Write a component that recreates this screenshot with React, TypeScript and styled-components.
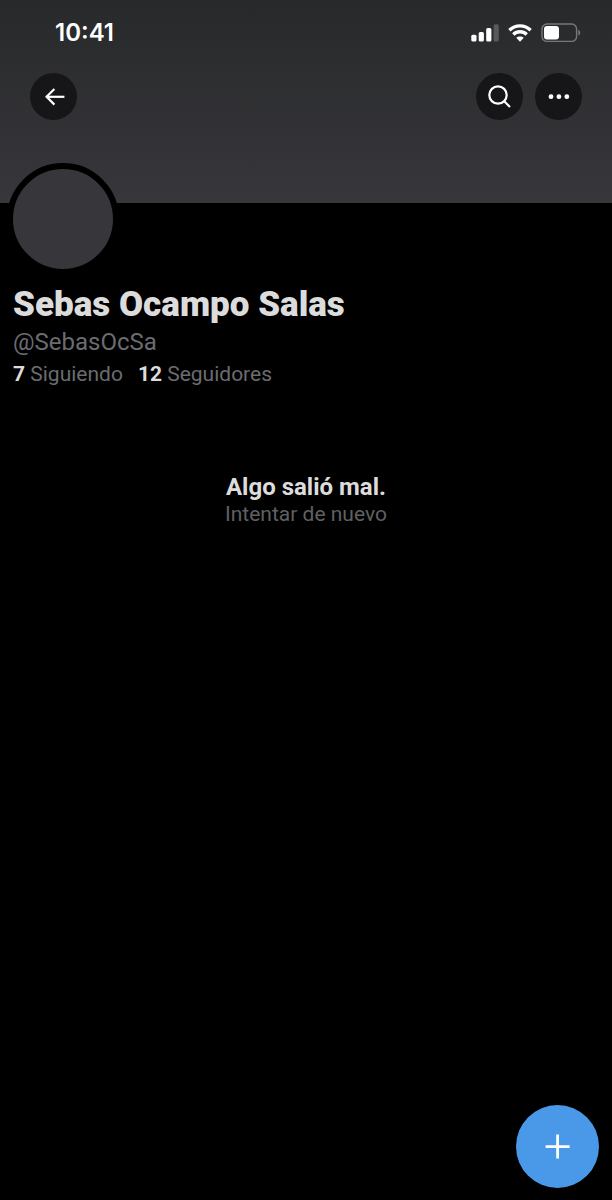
import React from "react";
import styled, { createGlobalStyle } from "styled-components";

interface Stat {
  count: number;
  label: string;
}

const stats: Stat[] = [
  { count: 7, label: "Siguiendo" },
  { count: 12, label: "Seguidores" },
];

function SignalIcon() {
  return (
    <svg width="28" height="18" viewBox="0 0 28 18" fill="#fff" aria-hidden="true">
      <rect x="0.3" y="10.8" width="5.2" height="6.8" rx="1.5" />
      <rect x="7.7" y="8" width="5.2" height="9.6" rx="1.5" />
      <rect x="15.2" y="4" width="5.2" height="13.6" rx="1.5" />
      <rect x="22.6" y="0.2" width="5.2" height="17.4" rx="1.5" fill="#58595b" />
    </svg>
  );
}

function WifiIcon() {
  return (
    <svg width="24" height="18" viewBox="0 0 24 18" aria-hidden="true">
      <g fill="none" stroke="#fff" strokeWidth="3.4">
        <path d="M1.4 6.2C7.3 .4 16.7 .4 22.6 6.2" />
        <path d="M5.3 10.5C9 6.9 15 6.9 18.7 10.5" />
      </g>
      <path d="M8.2 13.8c2.2-1.9 5.4-1.9 7.6 0L12 17.8Z" fill="#fff" />
    </svg>
  );
}

function BatteryIcon() {
  return (
    <svg width="40" height="20" viewBox="0 0 40 20" aria-hidden="true">
      <rect x="1" y="1" width="34.6" height="17.4" rx="5" fill="none" stroke="#77787a" strokeWidth="1.4" />
      <rect x="3" y="3" width="15" height="13.4" rx="3" fill="#fff" />
      <path d="M37.3 6.8c2.6.9 2.6 4.9 0 5.8Z" fill="#77787a" />
    </svg>
  );
}

function BackIcon() {
  return (
    <svg width="24" height="24" viewBox="0 0 24 24" fill="none" stroke="#fff" strokeWidth="2.2" aria-hidden="true">
      <path d="M22.4 11.8H4.2" />
      <path d="M12.4 4L4.6 11.8l7.8 7.8" />
    </svg>
  );
}

function SearchIcon() {
  return (
    <svg width="24" height="24" viewBox="0 0 24 24" fill="none" stroke="#fff" strokeWidth="2.2" aria-hidden="true">
      <circle cx="10" cy="10" r="8.7" />
      <path d="M16.2 16.2l5.8 5.8" />
    </svg>
  );
}

function MoreIcon() {
  return (
    <svg width="24" height="24" viewBox="0 0 24 24" fill="#fff" aria-hidden="true">
      <circle cx="4" cy="11.7" r="2.4" />
      <circle cx="11.9" cy="11.7" r="2.4" />
      <circle cx="19.8" cy="11.7" r="2.4" />
    </svg>
  );
}

function PlusIcon() {
  return (
    <svg width="26" height="26" viewBox="0 0 26 26" stroke="#fff" strokeWidth="2.8" aria-hidden="true">
      <path d="M12.6 .6v24M.6 12.6h24" />
    </svg>
  );
}

function App() {
  return (
    <>
      <GlobalStyle />
      <Banner>
        <StatusBar>
          <Clock>10:41</Clock>
          <StatusIcons>
            <SignalIcon />
            <WifiIcon />
            <BatteryIcon />
          </StatusIcons>
        </StatusBar>
        <Toolbar>
          <RoundButton aria-label="Atrás">
            <BackIcon />
          </RoundButton>
          <Actions>
            <RoundButton aria-label="Buscar">
              <SearchIcon />
            </RoundButton>
            <RoundButton aria-label="Más opciones">
              <MoreIcon />
            </RoundButton>
          </Actions>
        </Toolbar>
      </Banner>
      <Profile>
        <Avatar />
        <Name>Sebas Ocampo Salas</Name>
        <Handle>@SebasOcSa</Handle>
        <Stats>
          {stats.map((stat) => (
            <StatLink href="#" key={stat.label}>
              <strong>{stat.count}</strong> {stat.label}
            </StatLink>
          ))}
        </Stats>
      </Profile>
      <ErrorMessage>
        <ErrorTitle>Algo salió mal.</ErrorTitle>
        <RetryButton>Intentar de nuevo</RetryButton>
      </ErrorMessage>
      <ComposeButton aria-label="Publicar">
        <PlusIcon />
      </ComposeButton>
    </>
  );
}

const GlobalStyle = createGlobalStyle`
  * {
    box-sizing: border-box;
  }

  body {
    margin: 0;
    background: #000;
    color: #dcdcdc;
    font-family: Roboto, "Liberation Sans", sans-serif;
  }

  button {
    padding: 0;
    border: none;
    font-family: inherit;
    cursor: pointer;
  }

  svg {
    display: block;
  }
`;

const Banner = styled.header`
  height: 203px;
  background: linear-gradient(#28292b, #37373b);
`;

const StatusBar = styled.div`
  display: flex;
  align-items: center;
  justify-content: space-between;
  height: 65px;
  padding: 0 31px 0 55px;
`;

const Clock = styled.time`
  color: #fff;
  font-family: Inter, sans-serif;
  font-size: 24px;
  font-weight: 600;
`;

const StatusIcons = styled.div`
  display: flex;
  align-items: center;
  gap: 9px;
`;

const Toolbar = styled.nav`
  display: flex;
  justify-content: space-between;
  padding: 8px 30px 0;
`;

const Actions = styled.div`
  display: flex;
  gap: 12px;
`;

const RoundButton = styled.button`
  display: grid;
  place-items: center;
  width: 47px;
  height: 47px;
  border-radius: 50%;
  background: #161618;
`;

const Profile = styled.section`
  padding: 0 13px;
`;

const Avatar = styled.div`
  width: 112px;
  height: 112px;
  margin: -40px 0 0 -6px;
  border: 6px solid #000;
  border-radius: 50%;
  background: #37373b;
`;

const Name = styled.h1`
  margin: 10px 0 0;
  font-size: 35px;
  font-weight: 900;
  line-height: 40px;
`;

const Handle = styled.p`
  margin: 2px 0 0;
  color: #6b6c70;
  font-size: 24px;
  line-height: 30px;
`;

const Stats = styled.div`
  display: flex;
  gap: 15px;
  margin-top: 4px;
`;

const StatLink = styled.a`
  color: #6b6c70;
  font-size: 21px;
  line-height: 26px;
  text-decoration: none;

  strong {
    color: #dcdcdc;
    font-weight: 700;
  }
`;

const ErrorMessage = styled.section`
  display: flex;
  flex-direction: column;
  align-items: center;
  margin-top: 85px;
`;

const ErrorTitle = styled.h2`
  margin: 0;
  font-size: 24px;
  font-weight: 700;
  line-height: 30px;
`;

const RetryButton = styled.button`
  background: none;
  color: #5f6063;
  font-size: 21px;
  line-height: 24px;
`;

const ComposeButton = styled.button`
  position: fixed;
  right: 13px;
  bottom: 12px;
  display: grid;
  place-items: center;
  width: 83px;
  height: 83px;
  border-radius: 50%;
  background: #4a99e9;
`;

export default App;
